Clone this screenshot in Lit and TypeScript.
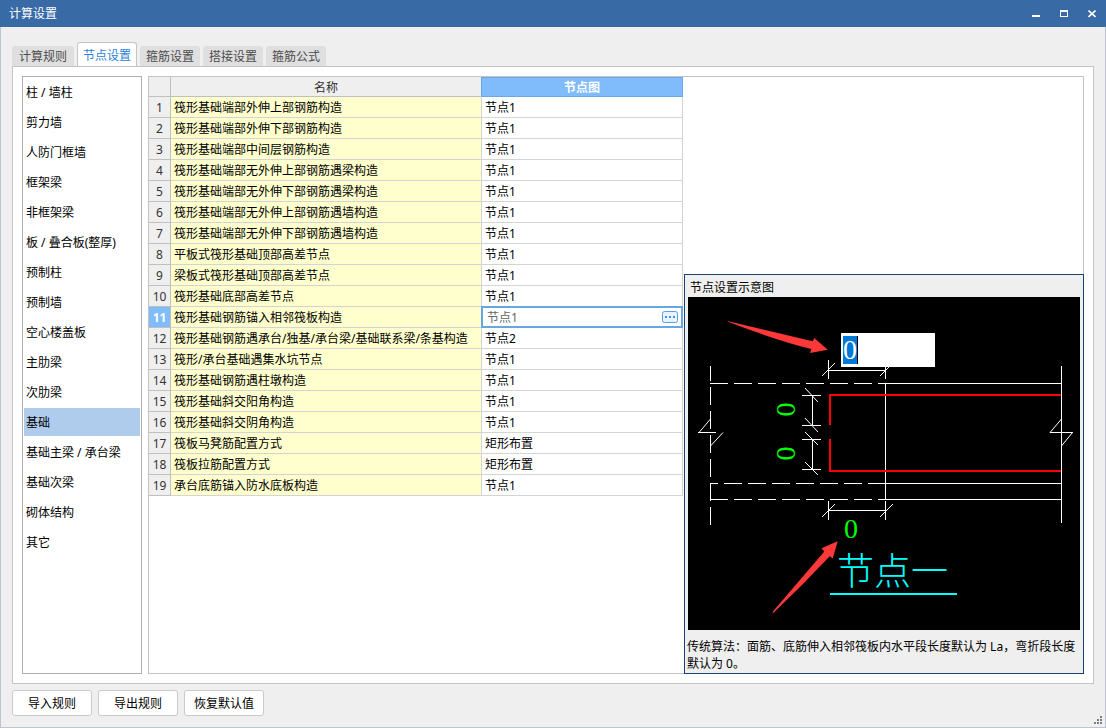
import { LitElement, html, css, svg, nothing } from "lit";
import { customElement, property, state } from "lit/decorators.js";
import { classMap } from "lit/directives/class-map.js";

const TABS = ["计算规则", "节点设置", "箍筋设置", "搭接设置", "箍筋公式"];

const CATEGORIES = [
  "柱 / 墙柱", "剪力墙", "人防门框墙", "框架梁", "非框架梁", "板 / 叠合板(整厚)",
  "预制柱", "预制墙", "空心楼盖板", "主肋梁", "次肋梁", "基础",
  "基础主梁 / 承台梁", "基础次梁", "砌体结构", "其它",
];

const ROWS: [string, string][] = [
  ["筏形基础端部外伸上部钢筋构造", "节点1"],
  ["筏形基础端部外伸下部钢筋构造", "节点1"],
  ["筏形基础端部中间层钢筋构造", "节点1"],
  ["筏形基础端部无外伸上部钢筋遇梁构造", "节点1"],
  ["筏形基础端部无外伸下部钢筋遇梁构造", "节点1"],
  ["筏形基础端部无外伸上部钢筋遇墙构造", "节点1"],
  ["筏形基础端部无外伸下部钢筋遇墙构造", "节点1"],
  ["平板式筏形基础顶部高差节点", "节点1"],
  ["梁板式筏形基础顶部高差节点", "节点1"],
  ["筏形基础底部高差节点", "节点1"],
  ["筏形基础钢筋锚入相邻筏板构造", "节点1"],
  ["筏形基础钢筋遇承台/独基/承台梁/基础联系梁/条基构造", "节点2"],
  ["筏形/承台基础遇集水坑节点", "节点1"],
  ["筏形基础钢筋遇柱墩构造", "节点1"],
  ["筏形基础斜交阳角构造", "节点1"],
  ["筏形基础斜交阴角构造", "节点1"],
  ["筏板马凳筋配置方式", "矩形布置"],
  ["筏板拉筋配置方式", "矩形布置"],
  ["承台底筋锚入防水底板构造", "节点1"],
];

const FONT = css`"Noto Sans", "Noto Sans CJK SC", sans-serif`;

@customElement("node-diagram")
class NodeDiagram extends LitElement {
  static styles = css`
    :host { display: block; position: relative; background: #000; }
    .drawing { display: block; width: 100%; }
    .thin { stroke: #fff; fill: none; shape-rendering: crispEdges; }
    .slash { stroke: #fff; fill: none; }
    .dash { stroke-dasharray: 18 6; }
    .rebar { stroke: #f00; stroke-width: 2; fill: none; shape-rendering: crispEdges; }
    .arrow { fill: #fc3838; }
    .value { fill: #0f0; font: 28px "Liberation Serif", serif; text-anchor: middle; }
    .name { fill: #0ff; font: 300 37px "Noto Sans CJK SC", sans-serif; }
    .underline { stroke: #0ff; stroke-width: 2; shape-rendering: crispEdges; }
    .length {
      position: absolute; left: 153px; top: 36px; box-sizing: border-box;
      width: 94px; height: 34px; margin: 0; padding: 0 2px; border: 0; outline: 0;
      color: #fff; font: 28px/34px "Liberation Serif", serif;
      background: linear-gradient(90deg, #0078d7 14px, #000 14px) 2px 3px / 15px 28px no-repeat #fff;
    }
  `;

  render() {
    return html`
      <svg class="drawing" viewBox="0 0 392 333" role="img" aria-label="节点一">
        ${svg`
        <path class="thin dash" d="M22.5 228V69"/>
        <path class="thin dash" d="M22 86.5H197"/>
        <path class="thin dash" stroke-dashoffset="10" d="M22 186.5H197"/>
        <path class="thin dash" d="M22 202.5H197"/>
        <path class="thin" d="M190 86.5H373M190 186.5H373M190 202.5H373M373.5 69V226M22.5 187V203"/>
        <path class="thin" d="M140.5 63V82M197.5 63V82M140 73.5H197M197.5 86V203M140.5 204V223M197.5 204V223M140 213.5H197"/>
        <path class="thin" d="M124.5 98V129M124.5 142V173M114 98.5H133M114 128.5H133M114 142.5H133M114 172.5H133"/>
        <path class="slash" d="M134 79L147 66M192 79L205 66M134 220L147 207M192 220L205 207"/>
        <path class="slash" d="M117 91L130 105M117 121L130 135M117 135L130 148M117 165L130 178"/>
        <path class="slash" d="M22.5 122L11 135.5M22.5 149L35 135.5M373.5 122L362 135.5M384.5 135.5L373.5 149"/>
        <path class="thin" d="M10 135.5H28M362 135.5H385"/>
        <path class="rebar" d="M142 128V98H373M142 142V174H373"/>
        <text class="value" transform="translate(107 112.5) rotate(-90)">0</text>
        <text class="value" transform="translate(107 156.5) rotate(-90)">0</text>
        <text class="value" x="163" y="241">0</text>
        <text class="name" x="149" y="288">节点一</text>
        <path class="underline" d="M142 297H269"/>
        <path class="arrow" d="M39.5 24L124.7 44.3L126.3 41L139.7 52.7L122 56L123.3 52Q90 44 39.5 24.5Z"/>
        <path class="arrow" d="M84.5 315L136.3 254.5L133.5 251.3L149.7 244.3L144.7 261.5L141.7 259.3Q115 288 85.3 316Z"/>`}
      </svg>
      <input class="length" aria-label="水平段长度" value="0" />
    `;
  }
}

@customElement("node-table")
class NodeTable extends LitElement {
  @property({ type: Number }) current = 11;

  static styles = css`
    :host { display: block; width: 534px; font: 12px ${FONT}; }
    .grid { width: 100%; table-layout: fixed; border-collapse: separate; border-spacing: 0; line-height: 18px; }
    .num { width: 22px; }
    .title { width: 311px; }
    th, td { box-sizing: border-box; padding: 2px 0 0; white-space: nowrap; border: 0 solid #d4d4d4; border-width: 0 1px 1px 0; }
    thead th { height: 20px; line-height: 17px; background: #efefef; border-color: #c0c0c0; color: #333; font-weight: 400; }
    thead .title { border-right-color: #6aa7e6; }
    thead .picked { line-height: 16px; color: #fff; font-weight: 700; background: #80bbfb; border-color: #6aa7e6; border-top-width: 1px; }
    tbody th { height: 21px; font-weight: 400; background: #efefef; color: #333; border-color: #c0c0c0; }
    tbody .active { background: #80bbfb; color: #fff; font-weight: 700; }
    td { position: relative; height: 21px; padding-left: 3px; color: #000; }
    .label { background: #ffffcd; }
    .editor {
      position: absolute; inset: -1px; display: flex; align-items: center;
      border: 2px solid #67a6e5; background: #fff; padding: 0 3px;
    }
    .field { flex: 1; min-width: 0; border: 0; outline: 0; padding: 2px 0 0 1px; margin: 0; color: #666; background: none; font: 12px/16px ${FONT}; }
    .more { padding: 0; border: 0; background: none; display: flex; }
  `;

  render() {
    return html`
      <table class="grid">
        <thead>
          <tr><th class="num"></th><th class="title" scope="col">名称</th><th class="picked" scope="col">节点图</th></tr>
        </thead>
        <tbody>
          ${ROWS.map(([name, node], i) => {
            const on = i + 1 === this.current;
            return html`<tr>
              <th scope="row" class=${classMap({ active: on })}>${i + 1}</th>
              <td class="label">${name}</td>
              <td>${on ? this.editor(node) : node}</td>
            </tr>`;
          })}
        </tbody>
      </table>
    `;
  }

  private editor(value: string) {
    return html`<div class="editor">
      <input class="field" aria-label="节点图" .value=${value} />
      <button class="more" aria-label="选择节点图">
        <svg width="16" height="12" viewBox="0 0 16 12">
          <rect x=".5" y=".5" width="15" height="11" rx="2" fill="#e9f3fd" stroke="#5a9fe0" />
          <path d="M3 5h2v2H3zM7 5h2v2H7zM11 5h2v2h-2z" fill="#4a90d9" />
        </svg>
      </button>
    </div>`;
  }
}

@customElement("app-root")
class AppRoot extends LitElement {
  @state() private tab = 1;
  @state() private category = 11;

  static styles = css`
    :host { display: block; font: 12px/16px ${FONT}; color: #000; }
    * { box-sizing: border-box; }
    button { font: inherit; margin: 0; }
    .window { display: flex; flex-direction: column; min-height: 100vh; background: #efefef; }
    .titlebar { display: flex; align-items: center; height: 27px; padding-left: 9px; background: #386aa5; color: #fff; }
    .caption { flex: 1; margin: 0; font-size: 12px; font-weight: 400; }
    .sys { width: 28px; height: 27px; padding: 0; border: 0; background: none; display: grid; place-items: center; }
    .body { position: relative; flex: 1; display: flex; flex-direction: column; padding: 15px 11px 11px; border: 1px solid #bcc3d2; border-top: 0; }
    .tabs { display: flex; align-items: flex-end; gap: 3px; height: 25px; margin-bottom: -1px; }
    .tab { height: 20px; margin-bottom: 1px; padding: 2px 6px 0; border: 0; border-radius: 3px 3px 0 0; background: #dfdfdf; color: #4c4c4c; }
    .tab:first-child { padding-left: 7px; padding-right: 7px; }
    .tab.on { height: 25px; margin-bottom: 0; padding: 2px 5px 0; border: 1px solid #c3c3c8; border-bottom: 0; background: #fff; color: #2a7fde; }
    .panel { flex: 1; display: flex; gap: 6px; padding: 9px; border: 1px solid #c3c3c8; background: #fff; }
    .list { width: 120px; margin: 0; padding: 1px; border: 1px solid #aeaeae; list-style: none; display: flex; flex-direction: column; gap: 2px; }
    .item { display: block; width: 100%; height: 28px; padding: 2px 2px 0; border: 0; background: none; color: #000; text-align: left; white-space: nowrap; }
    .item.on { background: #b0ccec; }
    .frame { flex: 1; min-width: 0; display: flex; justify-content: space-between; border: 1px solid #c3c3c3; }
    .preview { align-self: flex-end; flex: none; width: 400px; margin: 0 -1px -1px 0; padding: 0 3px 1px; border: 1px solid #1f3f72; background: #efefef; }
    .heading { margin: 0; padding: 5px 2px 1px; font-size: 12px; font-weight: 400; line-height: 16px; }
    .note { margin: 0 -1px; padding: 8px 0 0; line-height: 17px; }
    .actions { display: flex; gap: 6px; padding-top: 6px; }
    .action { width: 80px; height: 26px; padding: 2px 0 0; border: 1px solid #cacaca; border-radius: 3px; background: #fff; color: #000; }
    .grip { position: absolute; right: 3px; bottom: 3px; }
  `;

  render() {
    return html`
      <div class="window">
        <header class="titlebar">
          <h1 class="caption">计算设置</h1>
          <button class="sys" aria-label="最小化">
            <svg width="8" height="8"><path d="M0 5h8v2H0z" fill="#fff" /></svg>
          </button>
          <button class="sys" aria-label="最大化">
            <svg width="8" height="7" shape-rendering="crispEdges"><path d="M0 0h8v7H0zM1 2v4h6V2z" fill="#fff" fill-rule="evenodd" /></svg>
          </button>
          <button class="sys" aria-label="关闭">
            <svg width="8" height="8"><path d="M.5 .5L7.5 7M7.5 .5L.5 7" stroke="#fff" stroke-width="1.6" /></svg>
          </button>
        </header>
        <main class="body">
          <nav class="tabs" role="tablist">
            ${TABS.map((t, i) => html`<button role="tab" aria-selected=${i === this.tab}
              class=${classMap({ tab: true, on: i === this.tab })} @click=${() => (this.tab = i)}>${t}</button>`)}
          </nav>
          <section class="panel">
            <ul class="list">
              ${CATEGORIES.map((c, i) => html`<li><button aria-current=${i === this.category ? "true" : nothing}
                class=${classMap({ item: true, on: i === this.category })} @click=${() => (this.category = i)}>${c}</button></li>`)}
            </ul>
            <div class="frame">
              <node-table></node-table>
              <aside class="preview">
                <h2 class="heading">节点设置示意图</h2>
                <node-diagram></node-diagram>
                <p class="note">传统算法：面筋、底筋伸入相邻筏板内水平段长度默认为 La，弯折段长度默认为 0。</p>
              </aside>
            </div>
          </section>
          <footer class="actions">
            <button class="action">导入规则</button>
            <button class="action">导出规则</button>
            <button class="action">恢复默认值</button>
          </footer>
          <svg class="grip" width="8" height="8" aria-hidden="true">
            <path d="M6 0h2v2H6zM3 3h2v2H3zM6 3h2v2H6zM0 6h2v2H0zM3 6h2v2H3zM6 6h2v2H6z" fill="#7c7f86" />
          </svg>
        </main>
      </div>
    `;
  }
}
